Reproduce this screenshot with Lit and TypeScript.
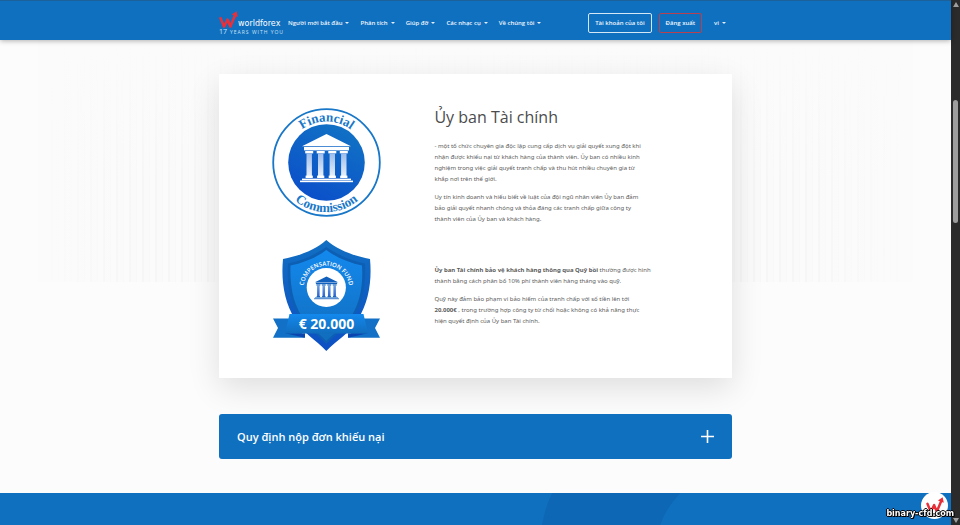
import { LitElement, html, css, svg } from "lit";
import { customElement } from "lit/decorators.js";

const NAV = ["Người mới bắt đầu", "Phân tích", "Giúp đỡ", "Các nhạc cụ", "Về chúng tôi"];

const arrowW = svg`
  <path d="M1.5 7.2 L5 15.6 L8.6 8.6 L11.4 15.6 L16.2 4" fill="none" stroke="#e8303a" stroke-width="2.6" stroke-linejoin="round" stroke-linecap="round"/>
  <path d="M12.6 3.6 L17.6 0.2 L18.8 6 Z" fill="#e8303a"/>`;

const temple = (fill: string, shaft: string) => svg`
  <path fill=${fill} d="M26.5 0 L51 12.2 H2 Z"/>
  <rect fill=${fill} x="4" y="13" width="45" height="3.4"/>
  ${[9.2, 20.7, 32.3, 43.8].map(
    (x) => svg`
      <rect fill=${fill} x=${x - 4} y="17" width="8" height="2.4"/>
      <rect fill=${shaft} x=${x - 2.7} y="19.4" width="5.4" height="23"/>
      <rect fill=${fill} x=${x - 3.6} y="41.6" width="7.2" height="2.4"/>`
  )}
  <rect fill=${fill} x="2" y="44.6" width="49" height="1.6"/>
  <rect fill=${fill} x="0" y="46.6" width="53" height="1.6"/>`;

@customElement("site-header")
class SiteHeader extends LitElement {
  static styles = css`
    :host {
      display: block;
      position: relative;
      background: #0f70c0;
      border-top: 1px solid #1c6199;
      box-shadow: 0 1px 5px rgba(0, 0, 0, 0.3);
      color: #fff;
    }
    .inner {
      display: flex;
      align-items: center;
      box-sizing: border-box;
      width: 100%;
      max-width: 513px;
      height: 39px;
      margin: 0 auto;
      padding: 5px 6px 0 0;
    }
    .logo {
      display: block;
      width: 64px;
      margin-right: 5px;
      color: #fff;
      text-decoration: none;
      white-space: nowrap;
    }
    .brand {
      display: flex;
      align-items: flex-end;
      font: 8px/10px "DejaVu Sans", sans-serif;
    }
    .mark {
      width: 19px;
      height: 18px;
      flex: none;
    }
    .tag {
      display: flex;
      align-items: baseline;
      gap: 3px;
      font: 5px/6px "Open Sans", sans-serif;
      letter-spacing: 1px;
      color: #cfe3f4;
    }
    .years {
      font-size: 7px;
      letter-spacing: 0;
    }
    nav {
      display: flex;
      gap: 11px;
    }
    button {
      display: flex;
      align-items: center;
      gap: 3px;
      padding: 0;
      border: 0;
      background: none;
      color: #f0f6fc;
      font: 600 6px/14px "Open Sans", sans-serif;
      white-space: nowrap;
      cursor: pointer;
    }
    .caret::after {
      content: "";
      display: block;
      border: 2px solid transparent;
      border-top-color: #e3eef8;
      border-bottom: 0;
    }
    .actions {
      display: flex;
      align-items: center;
      gap: 7px;
      margin-left: auto;
    }
    .outline {
      padding: 1px 6px;
      border: 1px solid #d5e6f5;
      border-radius: 2px;
      line-height: 16px;
    }
    .red {
      border-color: #b8404f;
    }
    .lang {
      margin-left: 5px;
    }
  `;
  render() {
    return html`<div class="inner">
      <a class="logo" href="#" aria-label="worldforex">
        <div class="brand">
          <svg class="mark" viewBox="0 0 19 18">${arrowW}</svg>
          <span>worldforex</span>
        </div>
        <div class="tag"><span class="years">17</span><span>YEARS WITH YOU</span></div>
      </a>
      <nav>${NAV.map((n) => html`<button class="caret">${n}</button>`)}</nav>
      <div class="actions">
        <button class="outline">Tài khoản của tôi</button>
        <button class="outline red">Đăng xuất</button>
        <button class="caret lang">vi</button>
      </div>
    </div>`;
  }
}

@customElement("commission-seal")
class CommissionSeal extends LitElement {
  static styles = css`
    :host,
    .art {
      display: block;
      width: 109px;
      height: 109px;
    }
    text {
      font: bold 13px "Liberation Serif", serif;
      fill: #1877c8;
    }
  `;
  render() {
    return html`<svg class="art" viewBox="0 0 109 109">
      <defs>
        <linearGradient id="disc" x1="0.8" y1="0" x2="0.3" y2="1">
          <stop offset="0" stop-color="#1173c4" />
          <stop offset="1" stop-color="#0b4fca" />
        </linearGradient>
        <linearGradient id="shaft" x1="0" y1="0" x2="0" y2="1">
          <stop offset="0" stop-color="#9dbdea" />
          <stop offset="1" stop-color="#e9f0fb" />
        </linearGradient>
        <path id="top" d="M13.5 54.5 A41 41 0 0 1 95.5 54.5" />
        <path id="bottom" d="M5 54.5 A49.5 49.5 0 0 0 104 54.5" />
      </defs>
      <circle cx="54.5" cy="54.5" r="53.3" fill="#fff" stroke="#1877c8" stroke-width="1.8" />
      <circle cx="54.5" cy="54.5" r="38.3" fill="url(#disc)" />
      <svg x="28" y="26" width="53" height="49" viewBox="0 0 53 49">${temple("#fff", "url(#shaft)")}</svg>
      <text text-anchor="middle"><textPath href="#top" startOffset="50%">Financial</textPath></text>
      <text text-anchor="middle"><textPath href="#bottom" startOffset="50%">Commission</textPath></text>
    </svg>`;
  }
}

@customElement("fund-shield")
class FundShield extends LitElement {
  static styles = css`
    :host,
    .art {
      display: block;
      width: 109px;
      height: 112px;
    }
    text {
      fill: #fff;
      font-family: "Open Sans", sans-serif;
    }
    .arc {
      font-size: 6px;
      font-weight: 600;
    }
    .sum {
      font-size: 14px;
      font-weight: 700;
    }
  `;
  render() {
    return html`<svg class="art" viewBox="0 0 109 112">
      <defs>
        <linearGradient id="rim" x1="0" y1="0" x2="0" y2="1">
          <stop offset="0" stop-color="#116fc2" />
          <stop offset="1" stop-color="#0d4fc4" />
        </linearGradient>
        <linearGradient id="face" x1="0" y1="0" x2="0" y2="1">
          <stop offset="0" stop-color="#1389ee" />
          <stop offset="1" stop-color="#116dbd" />
        </linearGradient>
        <linearGradient id="col" x1="0" y1="0" x2="0" y2="1">
          <stop offset="0" stop-color="#6fa0e0" />
          <stop offset="1" stop-color="#2a62cf" />
        </linearGradient>
        <path id="ring" d="M32.5 56 A23 23 0 1 1 76.1 56" />
      </defs>
      <path fill="url(#rim)" d="M54.3 0 C43 10 27 16 11 19 C9 40 12 62 23 79 C31 93 44 100 54.3 111 C65 100 78 93 86 79 C97 62 100 40 98 19 C82 16 66 10 54.3 0 Z" />
      <path fill="#0d5fb4" d="M54.3 7 C43 15 29 21 16 23.5 C15 42 17 60 27 76 C35 88 45 94 54.3 104 C64 94 74 88 82 76 C92 60 94 42 93 23.5 C80 21 66 15 54.3 7 Z" />
      <path fill="url(#face)" d="M54.3 10 C44 18 31 23 18.5 25.5 C18 43 20 60 29 75 C36 86 46 92 54.3 101 C63 92 73 86 80 75 C89 60 91 43 90 25.5 C78 23 65 18 54.3 10 Z" />
      <circle cx="54.3" cy="47.5" r="19.6" fill="#fff" />
      <svg x="42" y="36" width="25" height="24" viewBox="0 0 53 49">${temple("#1160bd", "url(#col)")}</svg>
      <path fill="#1271c6" d="M1 78.5 H19 L33 97.7 H1 L6 88 Z M108 78.5 H90 L76 97.7 H108 L103 88 Z" />
      <path fill="#0b45b0" d="M13 93.3 H33 V97.7 Z M96 93.3 H76 V97.7 Z" />
      <path fill="url(#face)" d="M17.5 74 H91.5 L96 93.5 H13 Z" />
      <text class="arc" text-anchor="middle"><textPath href="#ring" startOffset="50%">COMPENSATION FUND</textPath></text>
      <text class="sum" x="54.5" y="89" text-anchor="middle">€ 20.000</text>
    </svg>`;
  }
}

@customElement("scroll-rail")
class ScrollRail extends LitElement {
  static styles = css`
    :host {
      display: flex;
      flex-direction: column;
      align-items: center;
      box-sizing: border-box;
      width: 9px;
      height: 100vh;
      padding: 2px 0;
      background: #2b2b2b;
    }
    .up,
    .down {
      border: 3px solid transparent;
      border-top: 0;
      border-bottom: 5px solid #a0a0a0;
    }
    .down {
      border-top: 5px solid #a0a0a0;
      border-bottom: 0;
    }
    .before {
      flex: 93;
    }
    .thumb {
      flex: 123;
      width: 5px;
      border-radius: 3px;
      background: #9d9d9d;
    }
    .after {
      flex: 295;
    }
  `;
  render() {
    return html`<div class="up"></div>
      <div class="before"></div>
      <div class="thumb"></div>
      <div class="after"></div>
      <div class="down"></div>`;
  }
}

@customElement("app-root")
class AppRoot extends LitElement {
  static styles = css`
    :host {
      display: flex;
      position: relative;
      min-height: 100vh;
      font-family: "Open Sans", sans-serif;
    }
    .page {
      display: flex;
      flex-direction: column;
      flex: 1;
      min-width: 0;
      background: #fcfcfc;
    }
    site-header {
      z-index: 1;
    }
    main {
      position: relative;
      padding: 34px 0;
    }
    .stripes {
      position: absolute;
      top: 0;
      left: 4%;
      right: 4%;
      height: 242px;
      background:
        linear-gradient(to bottom, #fbfbfb, rgba(251, 251, 251, 0) 60%),
        linear-gradient(to right, #fbfbfb, rgba(251, 251, 251, 0) 12% 88%, #fbfbfb),
        repeating-linear-gradient(to right, #f6f6f6 0 2px, #fafafa 2px 7px, #f8f8f8 7px 8px, #fbfbfb 8px 13px);
    }
    .card,
    .accordion {
      position: relative;
      box-sizing: border-box;
      width: 100%;
      max-width: 513px;
      margin: 0 auto;
    }
    .card {
      display: grid;
      grid-template-columns: 42% 1fr;
      row-gap: 15px;
      padding: 34px 0 26px;
      background: #fff;
      box-shadow: 0 10px 30px rgba(0, 0, 0, 0.12);
      color: #5c5c5c;
    }
    commission-seal,
    fund-shield {
      justify-self: center;
    }
    .second {
      align-self: center;
    }
    h1 {
      margin: 0 0 15px;
      font-size: 16px;
      line-height: 18px;
      font-weight: 400;
      color: #4c4c4c;
    }
    p {
      margin: 0;
      font-family: "Noto Sans", "Open Sans", sans-serif;
      font-size: 6px;
      line-height: 11px;
      white-space: nowrap;
    }
    p + p {
      margin-top: 7px;
    }
    strong {
      font-weight: 700;
    }
    .accordion {
      display: flex;
      align-items: center;
      justify-content: space-between;
      height: 45px;
      margin-top: 36px;
      padding: 0 18px;
      border: 0;
      border-radius: 3px;
      background: #0f70c0;
      color: #fff;
      font: 600 11px/16px "Open Sans", sans-serif;
      cursor: pointer;
    }
    .plus {
      width: 13px;
      height: 13px;
    }
    footer {
      flex: 1;
      min-height: 32px;
      background: #0f70c0;
    }
    .slant {
      display: block;
      width: 15%;
      height: 32px;
      margin-left: 57%;
    }
    .float {
      position: fixed;
      right: 12px;
      bottom: 6px;
      z-index: 2;
      display: grid;
      place-items: center;
      width: 27px;
      height: 27px;
      border-radius: 50%;
      background: #fff;
    }
    .float svg {
      width: 18px;
      height: 17px;
    }
    .watermark {
      position: fixed;
      right: 6px;
      bottom: 6px;
      z-index: 3;
      color: #fff;
      font: bold 8px/10px "DejaVu Sans", sans-serif;
      text-shadow: 1px 0 #000, -1px 0 #000, 0 1px #000, 0 -1px #000, 1px 1px #000;
    }
  `;
  render() {
    return html`<div class="page">
        <site-header></site-header>
        <main>
          <div class="stripes"></div>
          <section class="card">
            <commission-seal></commission-seal>
            <div>
              <h1>Ủy ban Tài chính</h1>
              <p>
                - một tổ chức chuyên gia độc lập cung cấp dịch vụ giải quyết xung đột khi<br />
                nhận được khiếu nại từ khách hàng của thành viên. Ủy ban có nhiều kinh<br />
                nghiệm trong việc giải quyết tranh chấp và thu hút nhiều chuyên gia từ<br />
                khắp nơi trên thế giới.
              </p>
              <p>
                Uy tín kinh doanh và hiểu biết về luật của đội ngũ nhân viên Ủy ban đảm<br />
                bảo giải quyết nhanh chóng và thỏa đáng các tranh chấp giữa công ty<br />
                thành viên của Ủy ban và khách hàng.
              </p>
            </div>
            <fund-shield></fund-shield>
            <div class="second">
              <p>
                <strong>Ủy ban Tài chính bảo vệ khách hàng thông qua Quỹ bồi</strong> thường được hình<br />
                thành bằng cách phân bổ 10% phí thành viên hàng tháng vào quỹ.
              </p>
              <p>
                Quỹ này đảm bảo phạm vi bảo hiểm của tranh chấp với số tiền lên tới<br />
                <strong>20.000€</strong> , trong trường hợp công ty từ chối hoặc không có khả năng thực<br />
                hiện quyết định của Ủy ban Tài chính.
              </p>
            </div>
          </section>
          <button class="accordion" aria-expanded="false">
            <span>Quy định nộp đơn khiếu nại</span>
            <svg class="plus" viewBox="0 0 13 13"><path d="M6.5 0 V13 M0 6.5 H13" stroke="#fff" stroke-width="1.6" /></svg>
          </button>
        </main>
        <footer>
          <svg class="slant" viewBox="0 0 140 32" preserveAspectRatio="none"><path fill="#0d67b4" d="M10 0 H136 Q122 14 116 32 H0 Q3 14 10 0 Z" /></svg>
        </footer>
      </div>
      <scroll-rail></scroll-rail>
      <a class="float" href="#" aria-label="worldforex"><svg viewBox="0 0 19 18">${arrowW}</svg></a>
      <div class="watermark">binary-cfd.com</div>`;
  }
}
